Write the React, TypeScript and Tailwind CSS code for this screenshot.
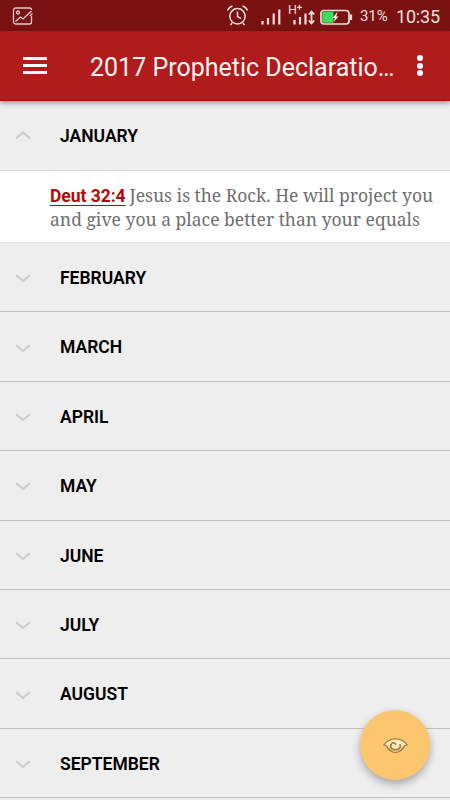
import React, { useState } from 'react';

const months = [
  'FEBRUARY',
  'MARCH',
  'APRIL',
  'MAY',
  'JUNE',
  'JULY',
  'AUGUST',
  'SEPTEMBER',
];

const Chevron = ({ up = false }: { up?: boolean }) => (
  <svg className="ml-[15px] mr-[29px] h-4 w-4 shrink-0" viewBox="0 0 16 16" fill="none" stroke="#cbcbcb" strokeWidth="2">
    <path d={up ? 'M1.200 10.200 8 4.400l6.800 5.800' : 'M1.200 6.200 8 12l6.800-5.800'} />
  </svg>
);

const StatusBar = () => (
  <div className="flex h-[31px] items-center bg-[#7a1212] text-[#f3dede]">
    <svg className="ml-3 h-[20px] w-[22px]" viewBox="0 0 22 20" fill="none" stroke="#e6cccc" strokeWidth="1.3">
      <path d="M19.500 10v6a2 2 0 0 1-2 2h-14a2 2 0 0 1-2-2V4a2 2 0 0 1 2-2h14a2 2 0 0 1 2 2" />
      <circle cx="6" cy="6.500" r="1.500" />
      <path d="m3.500 15.500 5-4.500 2.500 2 8.500-8M18 10l2.500-2.500" />
    </svg>

    {/* Alarm, signals and battery */}
    <svg className="ml-auto h-[31px] w-[130px]" viewBox="225 0 130 31" fill="none" stroke="#f3dede">
      <g strokeWidth="1.500">
        <circle cx="237.500" cy="16.300" r="7.700" />
        <path d="M237.500 11.500v5l3.500 2.200M227.500 10.500q1.500-3.500 5-4.500M247.500 10.500q-1.500-3.500-5-4.500M232 23l-1.500 2M243 23l1.500 2" />
      </g>
      <path d="M262.500 21v3.500M268 18v6.500M273.700 13.500v11M279.300 9.500v15" strokeWidth="2.200" />
      <path d="M294.500 20v4.500M300 17v7.500M305.500 13.500v11" strokeWidth="2.200" />
      <path d="M311.500 11.500v12M308.800 14.500l2.700-3 2.700 3M308.800 20.500l2.700 3 2.700-3" strokeWidth="1.800" />
      <text x="288" y="14" className="font-[Roboto] text-[12.500px]" fill="#f3dede" stroke="none">H</text>
      <path d="M297 7.300h5M299.500 4.800v5" strokeWidth="1.300" />
      <rect x="321" y="10.500" width="28" height="13.500" rx="3" strokeWidth="1.700" />
      <path d="M351 14.500v5.500" strokeWidth="2.200" />
      <path d="M324 11.800h9.500v11H324a1.700 1.700 0 0 1-1.700-1.700v-7.600a1.700 1.700 0 0 1 1.700-1.700z" fill="#42dc5c" stroke="none" />
      <path d="m337 12.500-4.500 5.500h2.500l-1.500 4 5-5.500h-2.500l1.500-4z" fill="#fff" stroke="none" />
    </svg>
    <span className="ml-[5px] w-[36px] whitespace-nowrap pt-[2px] text-[15px] tracking-[-0.1px]">31%</span>
    <span className="w-[54px] whitespace-nowrap pt-[2px] text-[18px] tracking-[-0.2px]">10:35</span>
  </div>
);

const AppBar = () => (
  <header className="relative z-10 flex h-[70px] items-center border-b border-[#bd0808] bg-[#b01b1b] shadow-[0_2px_5px_rgba(0,0,0,0.4)]">
    <button aria-label="Menu" className="ml-[23px] flex h-[17px] w-6 flex-col justify-between">
      <span className="h-[3px] w-full bg-white" />
      <span className="h-[3px] w-full bg-white" />
      <span className="h-[3px] w-full bg-white" />
    </button>
    <h1 className="ml-[43px] w-[322px] whitespace-nowrap pt-[5px] text-[25px] text-[#fff4f4]">2017 Prophetic Declaratio…</h1>
    <button aria-label="More" className="ml-[5px] flex h-[21px] w-[6px] flex-col justify-between">
      <span className="h-[6px] w-[6px] rounded-full bg-white" />
      <span className="h-[6px] w-[6px] rounded-full bg-white" />
      <span className="h-[6px] w-[6px] rounded-full bg-white" />
    </button>
  </header>
);

export default function App() {
  const [open, setOpen] = useState(true);

  return (
    <div className="relative h-[800px] w-[450px] overflow-hidden bg-[#eeeeee] font-[Roboto,sans-serif]">
      <StatusBar />
      <AppBar />

      <div
        className="flex h-[70px] items-center border-b border-[#e0e0e0] text-[17.500px] font-semibold text-black"
        onClick={() => setOpen(!open)}
      >
        <Chevron up={open} />
        <span className="pt-[2px]">JANUARY</span>
      </div>

      {open && (
        <div className="h-[72px] border-b border-[#e3e3e3] bg-white pl-[50px] pt-[12px] font-['Noto_Serif','DejaVu_Serif',serif] text-[17.500px] leading-6 text-[#6e6e6e]">
          <p className="flex whitespace-nowrap">
            <a className="mr-[4px] pt-px font-[Roboto] text-[17.500px] font-bold leading-6 tracking-[-0.05px] text-[#b50808] underline decoration-1 underline-offset-[3px]">Deut 32:4</a>
            <span>Jesus is the Rock. He will project you</span>
          </p>
          <p className="-mt-px whitespace-nowrap">and give you a place better than your equals</p>
        </div>
      )}

      {months.map((month) => (
        <div
          key={month}
          className="flex h-[69.400px] items-center border-b border-[#c0c0c0] text-[17.500px] font-semibold text-black"
        >
          <Chevron />
          <span className="pt-[2px]">{month}</span>
        </div>
      ))}

      {/* Floating action button */}
      <button
        aria-label="View"
        className="absolute left-[360px] top-[710px] flex h-[70px] w-[70px] items-center justify-center rounded-full bg-[#fcc66e] shadow-[0_4px_8px_rgba(0,0,0,0.3)]"
      >
        <svg className="h-[17px] w-[25px]" viewBox="0 0 25 17" fill="none" stroke="#94703f">
          <path d="M.8 8Q5 2 12.500 1.700 20 2 24.200 8l-3 1q-2 5.500-8.700 6.500-7-1-8.700-6.500z" fill="#ffe9bd" strokeWidth="1.100" />
          <path d="M8 7q-1.500 5.500 4.500 5.700Q18.500 12.500 17 7M8 7.500q2.500-3.500 5 .2" stroke="#a8762f" strokeWidth="1.600" />
          <path d="M4.500 9q2 4.500 8 5 6-.5 8-5" stroke="#c99d5c" strokeWidth=".8" />
        </svg>
      </button>
    </div>
  );
}
